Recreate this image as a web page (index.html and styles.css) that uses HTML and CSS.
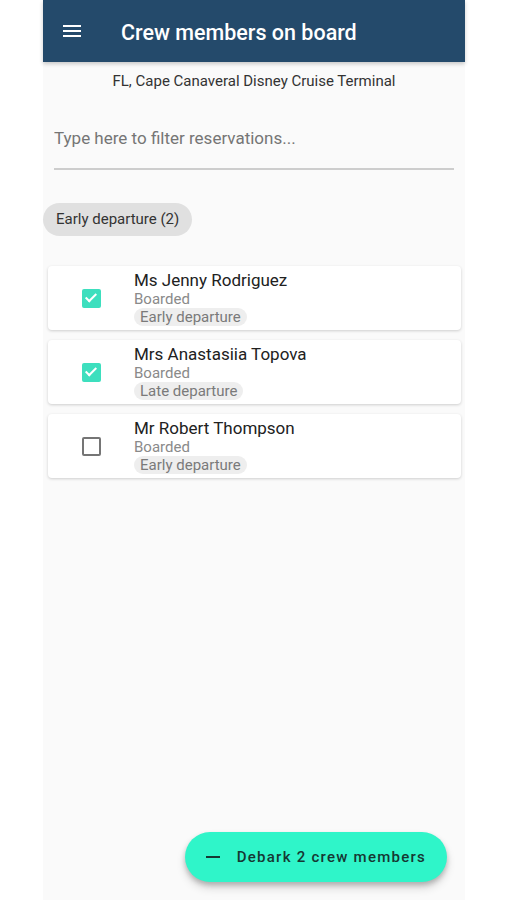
FILE: index.html
```html
<!DOCTYPE html>
<html lang="en">
<head>
    <meta charset="UTF-8">
    <meta name="viewport" content="width=device-width, initial-scale=1.0">
    <title>Crew members on board</title>
    <link rel="stylesheet" href="styles.css">
</head>
<body>
    <div class="app">
        <!-- top bar -->
        <div class="toolbar">
            <svg class="menu-icon" width="24" height="24" viewBox="0 0 24 24">
                <path d="M3 6h18v2H3zM3 11h18v2H3zM3 16h18v2H3z" fill="#fff"/>
            </svg>
            <div class="title">Crew members on board</div>
        </div>

        <div class="terminal">FL, Cape Canaveral Disney Cruise Terminal</div>

        <!-- filter -->
        <div class="filter">
            <input type="text" placeholder="Type here to filter reservations...">
        </div>

        <div class="chips">
            <span class="chip">Early departure (2)</span>
        </div>

        <!-- crew list -->
        <div class="list">
            <div class="card">
                <div class="check-col"><span class="checkbox checked"></span></div>
                <div class="info">
                    <div class="name">Ms Jenny Rodriguez</div>
                    <div class="status">Boarded</div>
                    <span class="tag">Early departure</span>
                </div>
            </div>
            <div class="card">
                <div class="check-col"><span class="checkbox checked"></span></div>
                <div class="info">
                    <div class="name">Mrs Anastasiia Topova</div>
                    <div class="status">Boarded</div>
                    <span class="tag">Late departure</span>
                </div>
            </div>
            <div class="card">
                <div class="check-col"><span class="checkbox"></span></div>
                <div class="info">
                    <div class="name">Mr Robert Thompson</div>
                    <div class="status">Boarded</div>
                    <span class="tag">Early departure</span>
                </div>
            </div>
        </div>

        <button class="fab" type="button">
            <span class="minus"></span>
            <span>Debark 2 crew members</span>
        </button>
    </div>
</body>
</html>
```

FILE: styles.css
```css
body {
    margin: 0;
    padding: 0;
    background: #ffffff;
    font-family: Roboto, "Liberation Sans", sans-serif;
}

.app {
    position: relative;
    margin-left: 43px;
    width: 422px;
    height: 900px;
    background: #fafafa;
    display: flex;
    flex-direction: column;
}

.toolbar {
    height: 62px;
    background: #244a6b;
    display: flex;
    align-items: center;
    padding-left: 17px;
    box-shadow: 0 2px 4px rgba(0, 0, 0, 0.2);
}

.menu-icon {
    margin-top: -1px;
}

.title {
    margin-left: 37px;
    margin-top: 2px;
    color: #ffffff;
    font-size: 21.5px;
    font-weight: 500;
}

.terminal {
    margin-top: 9px;
    text-align: center;
    font-size: 15px;
    line-height: 20px;
    color: #333;
}

.filter {
    margin: 25px 11px 0 11px;
}

.filter input {
    width: 100%;
    height: 54px;
    box-sizing: border-box;
    padding: 13px 0 21px 0;
    border: none;
    border-bottom: 2px solid #cdcdcd;
    background: transparent;
    font-family: inherit;
    font-size: 17px;
    line-height: 20px;
    outline: none;
}

.filter input::placeholder {
    color: #757575;
}

.chips {
    margin-top: 33px;
    display: flex;
}

.chip {
    height: 33px;
    line-height: 33px;
    padding: 0 13px;
    border-radius: 17px;
    background: #e0e0e0;
    font-size: 15px;
    color: #333;
}

.list {
    margin: 30px 4px 0 5px;
    display: flex;
    flex-direction: column;
    gap: 10px;
}

.card {
    height: 64px;
    box-sizing: border-box;
    background: #ffffff;
    border-radius: 4px;
    box-shadow: 0 1px 3px rgba(0, 0, 0, 0.18);
    display: flex;
    align-items: center;
}

.check-col {
    width: 86px;
    display: flex;
    justify-content: center;
}

.checkbox {
    width: 19px;
    height: 19px;
    box-sizing: border-box;
    border: 2px solid #757575;
    border-radius: 2px;
    position: relative;
}

.checkbox.checked {
    background: #3ddfbe;
    border-color: #3ddfbe;
}

.checkbox.checked::after {
    content: "";
    position: absolute;
    left: 4px;
    top: 0px;
    width: 4px;
    height: 9px;
    border: solid #ffffff;
    border-width: 0 2px 2px 0;
    transform: rotate(45deg);
}

.info {
    display: flex;
    flex-direction: column;
    align-items: flex-start;
}

.name {
    font-size: 17px;
    line-height: 20px;
    color: #212121;
}

.status {
    font-size: 15px;
    line-height: 18px;
    color: #8a8a8a;
}

.tag {
    height: 18px;
    line-height: 18px;
    padding: 0 6px;
    border-radius: 9px;
    background: #eeeeee;
    font-size: 15px;
    color: #7a7a7a;
}

.fab {
    position: absolute;
    right: 18px;
    bottom: 18px;
    height: 50px;
    padding: 0 21px;
    border: none;
    border-radius: 25px;
    background: #2ff5c9;
    box-shadow: 0 3px 5px rgba(0, 0, 0, 0.2), 0 6px 10px rgba(0, 0, 0, 0.14);
    display: flex;
    align-items: center;
    gap: 17px;
    font-family: inherit;
    font-size: 15px;
    font-weight: 500;
    letter-spacing: 1.25px;
    color: #163833;
    cursor: pointer;
}

.minus {
    width: 14px;
    height: 2.5px;
    background: #163833;
}
```
